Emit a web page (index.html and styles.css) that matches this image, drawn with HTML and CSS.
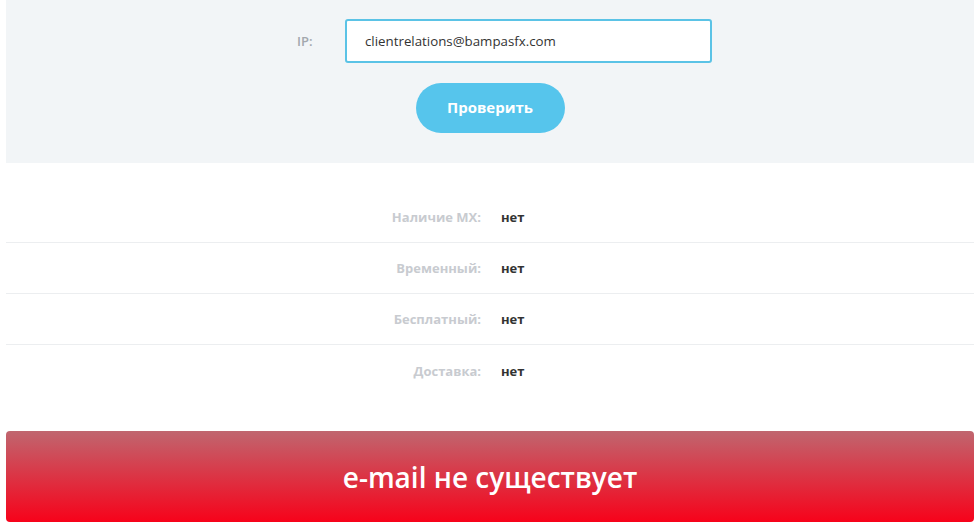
FILE: index.html
```html
<!DOCTYPE html>
<html lang="ru">
<head>
    <meta charset="UTF-8">
    <meta name="viewport" content="width=device-width, initial-scale=1.0">
    <title>Проверка e-mail</title>
    <link rel="stylesheet" href="styles.css">
</head>
<body>
    <div class="page">
        <div class="check-panel">
            <form class="check-form">
                <div class="form-row">
                    <label for="ip">IP:</label>
                    <input type="text" id="ip" value="clientrelations@bampasfx.com">
                </div>
                <button type="button">Проверить</button>
            </form>
        </div>

        <div class="results">
            <div class="result-row">
                <span class="result-label">Наличие MX:</span>
                <span class="result-value">нет</span>
            </div>
            <div class="result-row">
                <span class="result-label">Временный:</span>
                <span class="result-value">нет</span>
            </div>
            <div class="result-row">
                <span class="result-label">Бесплатный:</span>
                <span class="result-value">нет</span>
            </div>
            <div class="result-row">
                <span class="result-label">Доставка:</span>
                <span class="result-value">нет</span>
            </div>
        </div>

        <div class="status status-bad">e-mail не существует</div>
    </div>
</body>
</html>
```

FILE: styles.css
```css
body {
    margin: 0;
    font-family: "Open Sans", Arial, sans-serif;
    background-color: #ffffff;
}
.page {
    padding-left: 6px;
}
.check-panel {
    background-color: #f2f5f7;
    height: 163px;
    padding-top: 19px;
    box-sizing: border-box;
}
.check-form {
    display: flex;
    flex-direction: column;
    align-items: center;
}
.form-row {
    display: flex;
    align-items: center;
    align-self: flex-start;
    padding-left: 291px;
}
.form-row label {
    width: 48px;
    font-size: 13px;
    font-weight: 600;
    color: #a3a8ae;
}
.form-row input {
    width: 367px;
    height: 44px;
    box-sizing: border-box;
    padding: 0 18px;
    border: 2px solid #5bc3e6;
    border-radius: 3px;
    background-color: #ffffff;
    font-family: "Open Sans", Arial, sans-serif;
    font-size: 13.3px;
    color: #333;
    outline: none;
}
button {
    margin-top: 20px;
    width: 149px;
    height: 50px;
    padding: 0 0 3px;
    border: none;
    border-radius: 25px;
    background-color: #56c5ec;
    color: #ffffff;
    font-family: "Open Sans", Arial, sans-serif;
    font-size: 15px;
    font-weight: 700;
    cursor: pointer;
}
.results {
    padding-top: 29px;
}
.result-row {
    display: grid;
    grid-template-columns: 475px 1fr;
    column-gap: 20px;
    align-items: center;
    height: 51px;
    border-bottom: 1px solid #eceef0;
    box-sizing: border-box;
}
.result-row:last-child {
    border-bottom: none;
}
.result-label {
    text-align: right;
    font-size: 13px;
    font-weight: 700;
    color: #c8cbd0;
}
.result-value {
    font-size: 13px;
    font-weight: 700;
    color: #333333;
}
.status {
    margin-top: 35px;
    height: 91px;
    border-radius: 4px;
    display: flex;
    align-items: center;
    justify-content: center;
    color: #ffffff;
    font-size: 28px;
    font-weight: 600;
}
.status-bad {
    background: linear-gradient(to bottom, #c0666f, #f7021a);
}
```
